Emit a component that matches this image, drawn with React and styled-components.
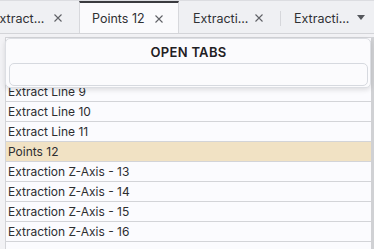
import { useLayoutEffect, useRef } from 'react';
import styled, { createGlobalStyle } from 'styled-components';

const tabs = [
    { id: 11, label: 'Extract Line 11' },
    { id: 12, label: 'Points 12', active: true },
    { id: 13, label: 'Extraction Z-Axis - 13' },
    { id: 14, label: 'Extraction Z-Axis - 14' },
];

const rows = [
    'Extract Line 5',
    'Extract Line 6',
    'Extract Line 7',
    'Extract Line 8',
    'Extract Line 9',
    'Extract Line 10',
    'Extract Line 11',
    'Points 12',
    'Extraction Z-Axis - 13',
    'Extraction Z-Axis - 14',
    'Extraction Z-Axis - 15',
    'Extraction Z-Axis - 16',
];

// long names get cut short in the tab header
const shortName = (name) => (name.length > 10 ? name.slice(0, 8).trimEnd() + '...' : name);

function CloseIcon() {
    return (
        <svg width="8" height="8" viewBox="0 0 8 8">
            <path d="M0.5 0.5 L7.5 7.5 M7.5 0.5 L0.5 7.5" stroke="#5f6166" strokeWidth="1.1" fill="none" />
        </svg>
    );
}

function App() {
    const stripRef = useRef(null);
    const listRef = useRef(null);

    useLayoutEffect(() => {
        if (stripRef.current) stripRef.current.scrollLeft = 22;
        if (listRef.current) listRef.current.scrollTop = 36;
    }, []);

    return (
        <Page>
            <GlobalStyle />
            <TabBar>
                <TabStrip ref={stripRef}>
                    {tabs.map((tab, i) => (
                        <Tab key={tab.id} $active={tab.active} $sep={i > 0 && !tab.active && !tabs[i - 1].active}>
                            <TabLabel>{shortName(tab.label)}</TabLabel>
                            <Close>
                                <CloseIcon />
                            </Close>
                        </Tab>
                    ))}
                </TabStrip>
                <OverflowButton>
                    <svg width="8" height="5" viewBox="0 0 8 5">
                        <path d="M0 0 H8 L4 5 Z" fill="#55575c" />
                    </svg>
                </OverflowButton>
            </TabBar>

            <Body>
                <List ref={listRef}>
                    {rows.map((name) => (
                        <Row key={name} $selected={name === 'Points 12'}>
                            {name}
                        </Row>
                    ))}
                </List>

                <Menu>
                    <MenuTitle>OPEN TABS</MenuTitle>
                    <Search />
                </Menu>
            </Body>
        </Page>
    );
}

const GlobalStyle = createGlobalStyle`
    html, body {
        margin: 0;
        padding: 0;
        background: #f2f2f5;
        font-family: Inter, "Noto Sans", sans-serif;
        overflow: hidden;
    }
`;

const Page = styled.div`
    width: 374px;
    height: 249px;
    display: flex;
    flex-direction: column;
    overflow: hidden;
`;

const TabBar = styled.div`
    height: 34px;
    box-sizing: border-box;
    display: flex;
    background: #eff0f3;
    border-top: 1px solid #dcdde1;
    border-bottom: 1px solid #d3d4d8;
`;

const TabStrip = styled.div`
    flex: 1;
    min-width: 0;
    display: flex;
    overflow: hidden;
`;

const Tab = styled.div`
    position: relative;
    flex: 0 0 auto;
    width: ${(p) => (p.$active ? '100px' : '101px')};
    min-width: 0;
    box-sizing: border-box;
    display: flex;
    align-items: center;
    gap: 2px;
    padding: 0 ${(p) => (p.$active ? '14px' : '15px')} 0 ${(p) => (p.$active ? '12px' : '13px')};
    font-size: 12.5px;
    color: #2f3033;
    background: ${(p) => (p.$active ? '#fafafc' : 'transparent')};
    border-top: 2px solid ${(p) => (p.$active ? '#3a3b3f' : 'transparent')};
    border-left: 1px solid ${(p) => (p.$active ? '#d7d8dc' : 'transparent')};
    border-right: 1px solid ${(p) => (p.$active ? '#d7d8dc' : 'transparent')};
    margin-bottom: ${(p) => (p.$active ? '-1px' : '0')};

    &::before {
        content: '';
        display: ${(p) => (p.$sep ? 'block' : 'none')};
        position: absolute;
        left: -1px;
        top: 8px;
        height: 15px;
        width: 1px;
        background: #d6d7db;
    }
`;

const TabLabel = styled.span`
    flex: 1 1 0;
    min-width: 0;
    white-space: nowrap;
    overflow: hidden;
`;

const Close = styled.span`
    flex: 0 0 10px;
    display: flex;
    align-items: center;
    justify-content: center;
`;

const OverflowButton = styled.div`
    flex: 0 0 22px;
    display: flex;
    align-items: center;
    justify-content: center;
    padding-right: 2px;
    background: #eff0f3;
`;

const Body = styled.div`
    position: relative;
    flex: 1;
    display: flex;
    min-height: 0;
    padding-top: 3px;
`;

const List = styled.div`
    flex: 1;
    margin-left: 5px;
    padding-bottom: 12px;
    background: #fbfbfe;
    border-top: 1px solid #d3d4d8;
    border-left: 1px solid #d3d4d8;
    border-right: 3px solid #d0d1d4;
    overflow: hidden;
`;

const Row = styled.div`
    height: 19px;
    line-height: 19px;
    padding-left: 2px;
    font-size: 12px;
    color: #2c2d30;
    white-space: nowrap;
    background: ${(p) => (p.$selected ? '#f1e2c4' : 'transparent')};
    border-bottom: 1px solid #d3d4d8;
`;

const Menu = styled.div`
    position: absolute;
    left: 5px;
    top: 4px;
    width: 366px;
    box-sizing: border-box;
    padding: 5px 2px 1px 3px;
    background: #fbfbfd;
    border: 1px solid #dcdee3;
    border-radius: 5px;
    box-shadow: 0 2px 5px rgba(0, 0, 0, 0.12);
`;

const MenuTitle = styled.div`
    text-align: center;
    font-size: 13px;
    font-weight: 600;
    color: #1f2023;
    letter-spacing: 0.3px;
    line-height: 16px;
    margin-bottom: 3px;
`;

const Search = styled.div`
    height: 23px;
    box-sizing: border-box;
    background: #fbfbfd;
    border: 1px solid #d6d9df;
    border-radius: 5px;
`;

export default App;
